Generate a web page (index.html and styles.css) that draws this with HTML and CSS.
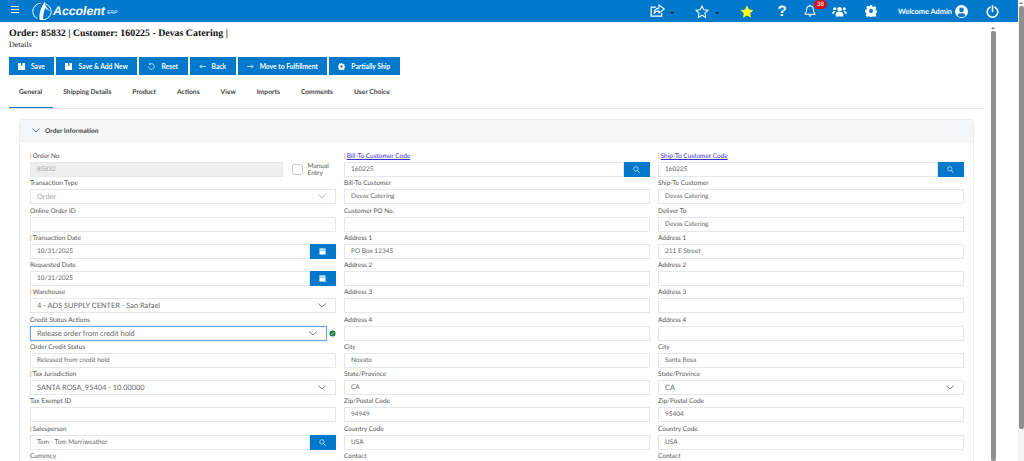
FILE: index.html
```html
<!DOCTYPE html>
<html>
<head>
    <meta charset="utf-8">
    <meta name="viewport" content="width=device-width, initial-scale=1">
    <title>Order 85832</title>
    <link rel="stylesheet" href="styles.css">
</head>
<body>
<div class="window">
    <div class="app">
        <header class="topbar">
            <svg class="burger" viewBox="0 0 8 7"><path d="M0 .5h8M0 3.500h8M0 6.500h8" stroke="#fff" stroke-width="1.200"/></svg>
            <svg class="logo-mark" viewBox="0 0 20 20"><path d="M8.500 2.200C4 3 .8 6.400 .8 10.500c0 3 1.800 5.600 4.600 7M13.500 2.800c3.400 1.500 5.700 4.300 5.700 7.700 0 4.300-3.400 7.700-8 8.300" fill="none" stroke="#fff" stroke-width="1"/><path d="M13 .6c-.2 4 2.400 7.400 5.400 9.600-1.600-.4-3.400-1.400-5-3.200C11.800 10 11 14 11.200 19 9 19.400 8 19 7.600 18.600 7 12 9 5.600 13 .6z" fill="#fff"/></svg>
            <span class="logo-name">Accolent</span><span class="logo-erp">ERP</span>
            <div class="top-icons">
                <svg class="ic share" viewBox="0 0 16 15"><path d="M12.500 9.500v3.600H1.200V3.400h5" fill="none" stroke="#fff" stroke-width="1.300"/><path d="M9.600 1l5.600 4.400-5.600 4.400V7.400c-2.600 0-4.200.8-5.200 2.800 0-3.600 2-5.600 5.200-5.800z" fill="none" stroke="#fff" stroke-width="1.200" stroke-linejoin="round"/></svg>
                <span class="caret share-caret"></span>
                <svg class="ic star-o" viewBox="0 0 16 15"><path d="M8 1l2.100 4.500 4.900.6-3.600 3.400.9 4.900L8 11.900l-4.300 2.500.9-4.900L1 6.100l4.900-.6z" fill="none" stroke="#fff" stroke-width="1.200" stroke-linejoin="round"/></svg>
                <span class="caret star-caret"></span>
                <svg class="ic star-y" viewBox="0 0 16 15"><path d="M8 .6l2.300 4.700 5.100.7-3.700 3.600.9 5.100L8 12.200l-4.600 2.500.9-5.100L.6 6l5.100-.7z" fill="#ffff1e"/></svg>
                <span class="help">?</span>
                <span class="bell-wrap">
                    <svg class="ic bell" viewBox="0 0 14 15"><path d="M7 1.600c-2.600 0-3.900 2-3.900 4.200 0 3-.9 4.200-2 5.400h11.800c-1.100-1.200-2-2.400-2-5.400C10.900 3.600 9.600 1.600 7 1.600z" fill="none" stroke="#fff" stroke-width="1.200" stroke-linejoin="round"/><path d="M5.200 12.600c.3 1 1 1.500 1.800 1.500s1.500-.5 1.800-1.500z" fill="#fff"/><circle cx="7" cy="1.200" r=".9" fill="#fff"/></svg>
                    <span class="badge">38</span>
                </span>
                <svg class="ic users" viewBox="0 0 16 12"><circle cx="8" cy="3.600" r="2.500" fill="#fff"/><circle cx="2.800" cy="3" r="1.700" fill="#fff"/><circle cx="13.200" cy="3" r="1.700" fill="#fff"/><path d="M3.800 11.500V9.300c0-1.900 1.300-2.900 2.700-2.900h3c1.400 0 2.700 1 2.700 2.900v2.200z" fill="#fff"/><path d="M0 8.400c0-2 1-3 2.400-3h1.500c-1.200.8-1.700 1.800-1.700 3.100zM16 8.400c0-2-1-3-2.400-3h-1.500c1.200.8 1.700 1.800 1.700 3.100z" fill="#fff"/></svg>
                <svg class="ic gear" viewBox="0 0 14 14"><path fill-rule="evenodd" fill="#fff" d="M5.700 0h2.600l.4 1.900 1.100.5 1.700-1 1.800 1.800-1 1.700.5 1.100 1.900.4v2.600l-1.900.4-.5 1.100 1 1.700-1.800 1.800-1.700-1-1.100.5-.4 1.900H5.700l-.4-1.900-1.100-.5-1.700 1-1.800-1.800 1-1.700-.5-1.100L-.1 8.300V5.700l1.900-.4.5-1.100-1-1.700 1.800-1.800 1.700 1 1.100-.5zM7 4.700a2.300 2.300 0 1 0 0 4.600 2.300 2.300 0 0 0 0-4.600z"/></svg>
                <span class="welcome">Welcome Admin</span>
                <svg class="ic user" viewBox="0 0 14 14"><path fill-rule="evenodd" fill="#fff" d="M7 0a7 7 0 1 1 0 14A7 7 0 0 1 7 0zm0 2.800a2.500 2.500 0 1 0 0 5 2.500 2.500 0 0 0 0-5zM2.800 11.200C3.800 12.400 5.300 13 7 13s3.200-.6 4.200-1.800C10.800 9.800 9.600 9 8.600 9H5.400c-1 0-2.200.8-2.600 2.200z"/></svg>
                <svg class="ic power" viewBox="0 0 14 14"><path d="M4.300 2.400a5.700 5.700 0 1 0 5.400 0" fill="none" stroke="#fff" stroke-width="1.700" stroke-linecap="round"/><path d="M7 .9v6" stroke="#fff" stroke-width="1.700" stroke-linecap="round"/></svg>
            </div>
        </header>

        <div class="body-row">
            <main class="content">
                <h1>Order: 85832 | Customer: 160225 - Devas Catering |</h1>
                <div class="subtitle">Details</div>

                <div class="actions">
                    <button class="btn"><svg class="btn-ic" viewBox="0 0 8 8"><path d="M0 0h8v8H0z" fill="#fff"/><path d="M3.500 0h1.500v3H3.500z" fill="#0078cc"/></svg>Save</button>
                    <button class="btn"><svg class="btn-ic" viewBox="0 0 8 8"><path d="M0 0h8v8H0z" fill="#fff"/><path d="M3.500 0h1.500v3H3.500z" fill="#0078cc"/></svg>Save &amp; Add New</button>
                    <button class="btn"><svg class="btn-ic" viewBox="0 0 8 8"><path d="M2 1.500a3.200 3.200 0 1 1-1.200 2.500" fill="none" stroke="#fff" stroke-width=".8"/><path d="M.6 .5l2.300.2-.6 2z" fill="#fff"/></svg>Reset</button>
                    <button class="btn"><svg class="btn-ic" viewBox="0 0 8 8"><path d="M8 4H1M3.200 1.800L1 4l2.200 2.200" fill="none" stroke="#fff" stroke-width=".8"/></svg>Back</button>
                    <button class="btn"><svg class="btn-ic" viewBox="0 0 8 8"><path d="M0 4h7M4.800 1.800L7 4 4.800 6.200" fill="none" stroke="#fff" stroke-width=".8"/></svg>Move to Fulfillment</button>
                    <button class="btn"><svg class="btn-ic" viewBox="0 0 14 14"><path fill-rule="evenodd" fill="#fff" d="M5.700 0h2.600l.4 1.900 1.100.5 1.700-1 1.800 1.800-1 1.700.5 1.100 1.900.4v2.600l-1.900.4-.5 1.100 1 1.700-1.800 1.800-1.700-1-1.100.5-.4 1.900H5.700l-.4-1.900-1.100-.5-1.700 1-1.800-1.800 1-1.700-.5-1.100L-.1 8.300V5.700l1.900-.4.5-1.100-1-1.700 1.800-1.800 1.700 1 1.100-.5zM7 4.700a2.300 2.300 0 1 0 0 4.600 2.300 2.300 0 0 0 0-4.600z"/></svg>Partially Ship</button>
                </div>

                <nav class="tabs">
                    <a class="tab active">General</a>
                    <a class="tab">Shipping Details</a>
                    <a class="tab">Product</a>
                    <a class="tab">Actions</a>
                    <a class="tab">View</a>
                    <a class="tab">Imports</a>
                    <a class="tab">Comments</a>
                    <a class="tab">User Choice</a>
                </nav>

                <section class="card">
                    <div class="card-head">
                        <svg class="card-chevron" viewBox="0 0 10 6"><path d="M.7.7L5 5l4.300-4.300" fill="none" stroke="#333" stroke-width="1"/></svg>
                        Order Information
                    </div>
                    <div class="form-grid">
                        <div class="col">
                            <div class="field">
                                <label class="req">Order No</label>
                                <div class="line">
                                    <div class="input disabled grow">85832</div>
                                    <span class="check"></span>
                                    <span class="check-label">Manual<br>Entry</span>
                                </div>
                            </div>
                            <div class="field">
                                <label>Transaction Type</label>
                                <div class="input select big muted">Order<svg class="chev light" viewBox="0 0 10 6"><path d="M.5.700L5 5l4.500-4.300" fill="none" stroke="#aaa" stroke-width="1"/></svg></div>
                            </div>
                            <div class="field"><label>Online Order ID</label><div class="input"></div></div>
                            <div class="field">
                                <label class="req">Transaction Date</label>
                                <div class="line"><div class="input grow">10/31/2025</div><span class="addon"><svg viewBox="0 0 8 8" class="addon-ic"><path d="M.5 .5h7v7h-7z" fill="#fff"/><path d="M.5 2.400h7" stroke="#0078cc" stroke-width=".7"/></svg></span></div>
                            </div>
                            <div class="field">
                                <label>Requested Date</label>
                                <div class="line"><div class="input grow">10/31/2025</div><span class="addon"><svg viewBox="0 0 8 8" class="addon-ic"><path d="M.5 .5h7v7h-7z" fill="#fff"/><path d="M.5 2.400h7" stroke="#0078cc" stroke-width=".7"/></svg></span></div>
                            </div>
                            <div class="field">
                                <label class="req">Warehouse</label>
                                <div class="input select big">4 - ADS SUPPLY CENTER - San Rafael<svg class="chev" viewBox="0 0 10 6"><path d="M.5.700L5 5l4.500-4.300" fill="none" stroke="#555" stroke-width="1"/></svg></div>
                            </div>
                            <div class="field">
                                <label>Credit Status Actions</label>
                                <div class="line">
                                    <div class="input select big focused grow">Release order from credit hold<svg class="chev" viewBox="0 0 10 6"><path d="M.5.700L5 5l4.500-4.300" fill="none" stroke="#555" stroke-width="1"/></svg></div>
                                    <svg class="ok" viewBox="0 0 8 8"><circle cx="4" cy="4" r="3.500" fill="#14803c"/><path d="M2.200 4.200l1.200 1.100 2.300-2.500" fill="none" stroke="#fff" stroke-width=".8"/></svg>
                                </div>
                            </div>
                            <div class="field"><label>Order Credit Status</label><div class="input">Released from credit hold</div></div>
                            <div class="field">
                                <label class="req">Tax Jurisdiction</label>
                                <div class="input select big">SANTA ROSA_95404 - 10.00000<svg class="chev" viewBox="0 0 10 6"><path d="M.5.700L5 5l4.500-4.300" fill="none" stroke="#555" stroke-width="1"/></svg></div>
                            </div>
                            <div class="field"><label>Tax Exempt ID</label><div class="input"></div></div>
                            <div class="field">
                                <label class="req">Salesperson</label>
                                <div class="line"><div class="input grow">Tom - Tom Merriweather</div><span class="addon"><svg viewBox="0 0 8 8" class="addon-ic"><circle cx="3.300" cy="3.300" r="2.500" fill="none" stroke="#fff" stroke-width=".7"/><path d="M5.200 5.200L7.600 7.600" stroke="#fff" stroke-width=".9"/></svg></span></div>
                            </div>
                            <div class="field"><label>Currency</label></div>
                        </div>

                        <div class="col">
                            <div class="field">
                                <label class="req"><a class="link">Bill-To Customer Code</a></label>
                                <div class="line"><div class="input grow">160225</div><span class="addon"><svg viewBox="0 0 8 8" class="addon-ic"><circle cx="3.300" cy="3.300" r="2.500" fill="none" stroke="#fff" stroke-width=".7"/><path d="M5.200 5.200L7.600 7.600" stroke="#fff" stroke-width=".9"/></svg></span></div>
                            </div>
                            <div class="field"><label>Bill-To Customer</label><div class="input">Devas Catering</div></div>
                            <div class="field"><label>Customer PO No.</label><div class="input"></div></div>
                            <div class="field"><label>Address 1</label><div class="input">PO Box 12345</div></div>
                            <div class="field"><label>Address 2</label><div class="input"></div></div>
                            <div class="field"><label>Address 3</label><div class="input"></div></div>
                            <div class="field"><label>Address 4</label><div class="input"></div></div>
                            <div class="field"><label>City</label><div class="input">Novato</div></div>
                            <div class="field"><label>State/Province</label><div class="input">CA</div></div>
                            <div class="field"><label>Zip/Postal Code</label><div class="input">94949</div></div>
                            <div class="field"><label>Country Code</label><div class="input">USA</div></div>
                            <div class="field"><label>Contact</label></div>
                        </div>

                        <div class="col">
                            <div class="field">
                                <label class="req"><a class="link">Ship-To Customer Code</a></label>
                                <div class="line"><div class="input grow">160225</div><span class="addon"><svg viewBox="0 0 8 8" class="addon-ic"><circle cx="3.300" cy="3.300" r="2.500" fill="none" stroke="#fff" stroke-width=".7"/><path d="M5.200 5.200L7.600 7.600" stroke="#fff" stroke-width=".9"/></svg></span></div>
                            </div>
                            <div class="field"><label>Ship-To Customer</label><div class="input">Devas Catering</div></div>
                            <div class="field"><label>Deliver To</label><div class="input">Devas Catering</div></div>
                            <div class="field"><label>Address 1</label><div class="input">211 E Street</div></div>
                            <div class="field"><label>Address 2</label><div class="input"></div></div>
                            <div class="field"><label>Address 3</label><div class="input"></div></div>
                            <div class="field"><label>Address 4</label><div class="input"></div></div>
                            <div class="field"><label>City</label><div class="input">Santa Rosa</div></div>
                            <div class="field"><label>State/Province</label><div class="input select big">CA<svg class="chev" viewBox="0 0 10 6"><path d="M.5.700L5 5l4.500-4.300" fill="none" stroke="#555" stroke-width="1"/></svg></div></div>
                            <div class="field"><label>Zip/Postal Code</label><div class="input">95404</div></div>
                            <div class="field"><label>Country Code</label><div class="input">USA</div></div>
                            <div class="field"><label>Contact</label></div>
                        </div>
                    </div>
                </section>
            </main>
            <div class="scrollbar inner"><span class="arrow"></span><span class="thumb"></span></div>
        </div>
    </div>
    <div class="scrollbar outer"><span class="arrow"></span><span class="thumb"></span></div>
</div>
</body>
</html>
```

FILE: styles.css
```css
html, body { margin: 0; height: 100%; overflow: hidden; background: #fff; }
body { font-family: Lato, "Open Sans", sans-serif; font-size: 7px; color: #555; text-rendering: geometricPrecision; }
.window { display: flex; height: 461px; }
.app { flex: 1; min-width: 0; display: flex; flex-direction: column; }

/* top bar */
.topbar { height: 22px; background: #0078cc; display: flex; align-items: center; color: #fff; flex: none; }
.burger { width: 8px; height: 7px; margin: -4px 0 0 11px; }
.logo-mark { width: 20px; height: 20px; margin-left: 13px; }
.logo-name { font-family: "Liberation Sans", sans-serif; font-style: italic; font-weight: bold; font-size: 12.3px; margin-left: 1px; }
.logo-erp { font-family: "Liberation Sans", sans-serif; font-style: italic; font-size: 5px; margin: 4px 0 0 2px; }
.top-icons { margin-left: auto; display: flex; align-items: center; height: 22px; }
.ic { display: block; flex: none; }
.share { width: 15px; height: 14px; }
.caret { border: 2px solid transparent; border-top-color: #1a1a1a; border-bottom: 0; margin-top: 3px; }
.share-caret { margin-left: 5px; }
.star-o { width: 14px; height: 13px; margin-left: 21px; }
.star-caret { margin-left: 6px; }
.star-y { width: 14px; height: 13px; margin-left: 21px; }
.help { width: 14px; margin-left: 21px; text-align: center; font: bold 15px "Liberation Sans", sans-serif; }
.bell-wrap { display: flex; margin-left: 15px; width: 31px; height: 14px; }
.bell { width: 12px; height: 14px; }
.badge { height: 9px; width: 13px; margin: -4px 0 0 -2px; border-radius: 5px; background: #d3141c; color: #fff; font-size: 6px; line-height: 9px; text-align: center; }
.users { width: 15px; height: 11px; margin-left: -3px; }
.gear { width: 12px; height: 12px; margin-left: 18px; }
.welcome { margin-left: 21px; width: 56px; font-size: 7.4px; font-weight: 700; white-space: nowrap; }
.user { width: 13px; height: 13px; margin-left: 1px; }
.power { width: 13px; height: 13px; margin: 0 19px 0 18px; }

/* page */
.body-row { flex: 1; display: flex; min-height: 0; }
.content { flex: 1; min-width: 0; padding: 6px 5px 0 8px; overflow: hidden; }
h1 { margin: 0 0 0 1px; font: bold 9.9px/12px "Liberation Serif", serif; color: #111; }
.subtitle { margin-left: 1px; font: 8px/10px "Liberation Serif", serif; color: #222; }
.actions { display: flex; gap: 2px; margin: 7px 0 0 1px; }
.btn { height: 18px; padding: 0 9.5px 0 9px; border: 0; background: #0078cc; color: #fff; font: 700 6.7px Lato, sans-serif; display: flex; align-items: center; white-space: nowrap; }
.btn-ic { width: 7px; height: 7px; margin-right: 6px; }
.tabs { display: flex; height: 33px; border-bottom: 1px solid #e6e6e6; padding-left: .5px; }
.tab { padding: 0 10.5px; height: 33px; line-height: 34px; font-weight: 700; font-size: 6.7px; color: #444; white-space: nowrap; box-sizing: border-box; }
.tab.active { border-bottom: 1px solid #0078cc; }

/* card */
.card { margin: 10px 11px 0 11px; border: 1px solid #ececec; border-radius: 4px 4px 0 0; }
.card-head { height: 21px; background: #f5f6f8; display: flex; align-items: center; font-weight: 700; font-size: 6.6px; color: #444; padding-left: 12px; border-bottom: 1px solid #f0f0f0; }
.card-chevron { width: 8px; height: 5px; margin-right: 5px; }
.form-grid { display: grid; grid-template-columns: repeat(3, 305.5px); column-gap: 8.5px; padding: 8px 0 0 10px; }
.col { display: flex; flex-direction: column; }

.field { height: 27.25px; flex: none; }
.field label { display: block; height: 12px; line-height: 14px; white-space: nowrap; font-size: 6.5px; }
.req::before { content: "|"; color: #d9534f; margin-right: 1px; }
.link { color: #3333cc; text-decoration: underline; }
.line { display: flex; align-items: center; }
.input { box-sizing: border-box; height: 15px; line-height: 14px; border: 1px solid #e4e7eb; padding-left: 6px; background: #fff; position: relative; font-size: 6.5px; color: #666; }
.grow { flex: 1; min-width: 0; }
.disabled { background: #eeeeee; color: #aaa; }
.big { font-size: 7.4px; }
.muted { color: #aaa; }
.focused { border-color: #6aa5f2; box-shadow: 0 0 1px #8bb8f5; margin-right: 2px; }
.chev { position: absolute; right: 9px; top: 4px; width: 8px; height: 5px; }
.check { width: 11px; height: 11px; border: 1px solid #ccc; border-radius: 2px; margin: 0 5px 0 9px; box-sizing: border-box; }
.check-label { width: 28px; font-size: 6.5px; line-height: 7px; }
.addon { width: 26px; height: 15px; background: #0078cc; display: flex; align-items: center; justify-content: center; flex: none; }
.addon-ic { width: 7px; height: 7px; }
.ok { width: 7px; height: 7px; flex: none; }

/* fake scrollbars */
.scrollbar { flex: none; display: flex; flex-direction: column; align-items: center; }
.scrollbar.inner { width: 6px; margin-right: 22px; padding-top: 5px; }
.scrollbar.outer { width: 6px; background: #f4f4f4; padding-top: 2px; }
.arrow { border: 2px solid transparent; border-bottom-color: #777; border-top: 0; }
.thumb { width: 5px; background: #8f8f8f; border-radius: 2px; margin-top: 2px; }
.inner .thumb { flex: 1; }
.outer .thumb { height: 423px; }
```
